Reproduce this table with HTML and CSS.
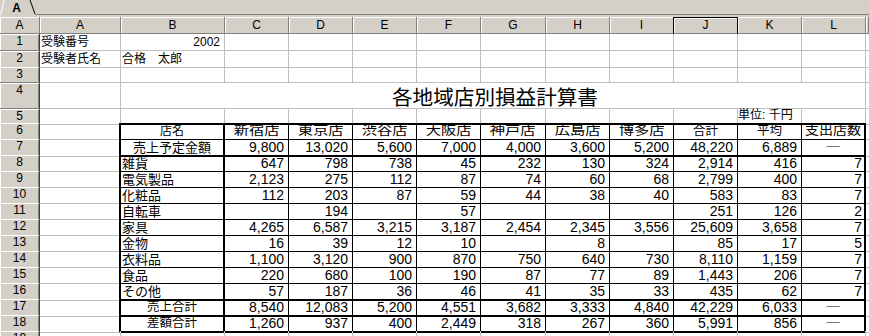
FILE: index.html
```html
<!DOCTYPE html>
<html lang="ja">
<head>
<meta charset="utf-8">
<title>各地域店別損益計算書</title>
<link rel="stylesheet" href="styles.css">
</head>
<body>
<div class="tabs">
  <svg width="869" height="17" viewBox="0 0 869 17">
    <rect width="869" height="17" fill="#d4d0c8"/>
    <line x1="0.5" y1="15" x2="4" y2="0" stroke="#ffffff"/>
    <text x="16.5" y="11.5" font-family="Liberation Sans, sans-serif" font-weight="bold" font-size="12" text-anchor="middle" fill="#000">A</text>
    <line x1="30" y1="0" x2="35" y2="14" stroke="#000000"/>
    <line x1="35" y1="14.5" x2="869" y2="14.5" stroke="#808080"/>
  </svg>
</div>
<div class="sheet">
  <div class="row h17">
    <div class="ch">A</div><div class="ch">A</div><div class="ch">B</div><div class="ch">C</div><div class="ch">D</div><div class="ch">E</div><div class="ch">F</div><div class="ch">G</div><div class="ch">H</div><div class="ch pre">I</div><div class="ch sel">J</div><div class="ch">K</div><div class="ch">L</div><div class="ch end"></div>
  </div>
  <div class="row h17">
    <div class="rh">1</div><div class="c">受験番号</div><div class="c n">2002</div><div class="c"></div><div class="c"></div><div class="c"></div><div class="c"></div><div class="c"></div><div class="c"></div><div class="c"></div><div class="c"></div><div class="c"></div><div class="c"></div><div class="c e"></div>
  </div>
  <div class="row">
    <div class="rh">2</div><div class="c">受験者氏名</div><div class="c">合格　太郎</div><div class="c"></div><div class="c"></div><div class="c"></div><div class="c"></div><div class="c"></div><div class="c"></div><div class="c"></div><div class="c"></div><div class="c"></div><div class="c"></div><div class="c e"></div>
  </div>
  <div class="row">
    <div class="rh">3</div><div class="c"></div><div class="c"></div><div class="c"></div><div class="c"></div><div class="c"></div><div class="c"></div><div class="c"></div><div class="c"></div><div class="c"></div><div class="c"></div><div class="c"></div><div class="c"></div><div class="c e"></div>
  </div>
  <div class="row h26">
    <div class="rh">4</div><div class="c"></div><div class="c title">各地域店別損益計算書</div><div class="c e"></div>
  </div>
  <div class="row h14">
    <div class="rh">5</div><div class="c"></div><div class="c top"></div><div class="c top"></div><div class="c top"></div><div class="c top"></div><div class="c top"></div><div class="c top"></div><div class="c top"></div><div class="c top"></div><div class="c top"></div><div class="c top unit">単位: 千円</div><div class="c top"></div><div class="c e"></div>
  </div>
  <div class="row">
    <div class="rh">6</div><div class="c ta"></div><div class="c tb m s12">店名</div><div class="c t m hd"><span class="wide">新宿店</span></div><div class="c t m hd"><span class="wide">東京店</span></div><div class="c t m hd"><span class="wide">渋谷店</span></div><div class="c t m hd"><span class="wide">大阪店</span></div><div class="c t m hd"><span class="wide">神戸店</span></div><div class="c t m hd"><span class="wide">広島店</span></div><div class="c t m hd"><span class="wide">博多店</span></div><div class="c t m s125">合計</div><div class="c t m s125">平均</div><div class="c tl m hd"><span class="wide2">支出店数</span></div><div class="c e"></div>
  </div>
  <div class="row k">
    <div class="rh">7</div><div class="c ta"></div><div class="c tb m">売上予定金額</div><div class="c t n">9,800</div><div class="c t n">13,020</div><div class="c t n">5,600</div><div class="c t n">7,000</div><div class="c t n">4,000</div><div class="c t n">3,600</div><div class="c t n">5,200</div><div class="c t n">48,220</div><div class="c t n">6,889</div><div class="c tl m"><span class="dash">―</span></div><div class="c e"></div>
  </div>
  <div class="row">
    <div class="rh">8</div><div class="c ta"></div><div class="c tb">雑貨</div><div class="c t n">647</div><div class="c t n">798</div><div class="c t n">738</div><div class="c t n">45</div><div class="c t n">232</div><div class="c t n">130</div><div class="c t n">324</div><div class="c t n">2,914</div><div class="c t n">416</div><div class="c tl n2">7</div><div class="c e"></div>
  </div>
  <div class="row">
    <div class="rh">9</div><div class="c ta"></div><div class="c tb">電気製品</div><div class="c t n">2,123</div><div class="c t n">275</div><div class="c t n">112</div><div class="c t n">87</div><div class="c t n">74</div><div class="c t n">60</div><div class="c t n">68</div><div class="c t n">2,799</div><div class="c t n">400</div><div class="c tl n2">7</div><div class="c e"></div>
  </div>
  <div class="row">
    <div class="rh">10</div><div class="c ta"></div><div class="c tb">化粧品</div><div class="c t n">112</div><div class="c t n">203</div><div class="c t n">87</div><div class="c t n">59</div><div class="c t n">44</div><div class="c t n">38</div><div class="c t n">40</div><div class="c t n">583</div><div class="c t n">83</div><div class="c tl n2">7</div><div class="c e"></div>
  </div>
  <div class="row">
    <div class="rh">11</div><div class="c ta"></div><div class="c tb">自転車</div><div class="c t n"></div><div class="c t n">194</div><div class="c t n"></div><div class="c t n">57</div><div class="c t n"></div><div class="c t n"></div><div class="c t n"></div><div class="c t n">251</div><div class="c t n">126</div><div class="c tl n2">2</div><div class="c e"></div>
  </div>
  <div class="row">
    <div class="rh">12</div><div class="c ta"></div><div class="c tb">家具</div><div class="c t n">4,265</div><div class="c t n">6,587</div><div class="c t n">3,215</div><div class="c t n">3,187</div><div class="c t n">2,454</div><div class="c t n">2,345</div><div class="c t n">3,556</div><div class="c t n">25,609</div><div class="c t n">3,658</div><div class="c tl n2">7</div><div class="c e"></div>
  </div>
  <div class="row">
    <div class="rh">13</div><div class="c ta"></div><div class="c tb">金物</div><div class="c t n">16</div><div class="c t n">39</div><div class="c t n">12</div><div class="c t n">10</div><div class="c t n"></div><div class="c t n">8</div><div class="c t n"></div><div class="c t n">85</div><div class="c t n">17</div><div class="c tl n2">5</div><div class="c e"></div>
  </div>
  <div class="row">
    <div class="rh">14</div><div class="c ta"></div><div class="c tb">衣料品</div><div class="c t n">1,100</div><div class="c t n">3,120</div><div class="c t n">900</div><div class="c t n">870</div><div class="c t n">750</div><div class="c t n">640</div><div class="c t n">730</div><div class="c t n">8,110</div><div class="c t n">1,159</div><div class="c tl n2">7</div><div class="c e"></div>
  </div>
  <div class="row">
    <div class="rh">15</div><div class="c ta"></div><div class="c tb">食品</div><div class="c t n">220</div><div class="c t n">680</div><div class="c t n">100</div><div class="c t n">190</div><div class="c t n">87</div><div class="c t n">77</div><div class="c t n">89</div><div class="c t n">1,443</div><div class="c t n">206</div><div class="c tl n2">7</div><div class="c e"></div>
  </div>
  <div class="row k">
    <div class="rh">16</div><div class="c ta"></div><div class="c tb">その他</div><div class="c t n">57</div><div class="c t n">187</div><div class="c t n">36</div><div class="c t n">46</div><div class="c t n">41</div><div class="c t n">35</div><div class="c t n">33</div><div class="c t n">435</div><div class="c t n">62</div><div class="c tl n2">7</div><div class="c e"></div>
  </div>
  <div class="row k">
    <div class="rh">17</div><div class="c ta"></div><div class="c tb m s125">売上合計</div><div class="c t n">8,540</div><div class="c t n">12,083</div><div class="c t n">5,200</div><div class="c t n">4,551</div><div class="c t n">3,682</div><div class="c t n">3,333</div><div class="c t n">4,840</div><div class="c t n">42,229</div><div class="c t n">6,033</div><div class="c tl m"><span class="dash">―</span></div><div class="c e"></div>
  </div>
  <div class="row k">
    <div class="rh">18</div><div class="c ta"></div><div class="c tb m s125">差額合計</div><div class="c t n">1,260</div><div class="c t n">937</div><div class="c t n">400</div><div class="c t n">2,449</div><div class="c t n">318</div><div class="c t n">267</div><div class="c t n">360</div><div class="c t n">5,991</div><div class="c t n">856</div><div class="c tl m"><span class="dash">―</span></div><div class="c e"></div>
  </div>
  <div class="row">
    <div class="rh">19</div><div class="c"></div><div class="c"></div><div class="c"></div><div class="c"></div><div class="c"></div><div class="c"></div><div class="c"></div><div class="c"></div><div class="c"></div><div class="c"></div><div class="c"></div><div class="c"></div><div class="c e"></div>
  </div>
</div>
</body>
</html>
```

FILE: styles.css
```css
* {
  box-sizing: border-box;
  margin: 0;
  padding: 0;
}

html, body {
  width: 869px;
  height: 336px;
  overflow: hidden;
  background: #ffffff;
}

body {
  font-family: "Liberation Sans", "Noto Sans CJK JP", sans-serif;
  font-size: 12px;
  color: #000000;
}

.tabs {
  height: 17px;
  background: #d4d0c8;
}

.tabs svg {
  display: block;
}

.sheet {
  display: flex;
  flex-direction: column;
}

.row {
  display: grid;
  grid-template-columns: 40px 81px 104px 64px 64px 64px 64px 65px 64px 64px 64px 64px 64px 3px;
  height: 16px;
  flex: none;
}

.h17 { height: 17px; }
.h26 { height: 26px; }
.h14 { height: 14px; }

.ch {
  background: #d4d0c8;
  border-right: 1px solid #808080;
  border-bottom: 1px solid #808080;
  box-shadow: inset 1px 1px 0 #ffffff;
  text-align: center;
  line-height: 16px;
}

.ch.pre {
  border-right-color: #000000;
}

.ch.sel {
  border-top: 1px solid #000000;
  border-right-color: #000000;
  line-height: 15px;
}

.rh {
  background: #d4d0c8;
  border-right: 1px solid #404040;
  border-bottom: 1px solid #808080;
  box-shadow: inset 1px 1px 0 #ffffff, inset -1px 0 0 #808080;
  text-align: center;
  line-height: 15px;
}

.c {
  border-right: 1px solid #c0c0c0;
  border-bottom: 1px solid #c0c0c0;
  white-space: nowrap;
  line-height: 15px;
  padding: 1px 0 0 1px;
}

.c.e {
  border-right: none;
}

.n {
  text-align: right;
  padding-right: 4px;
}

.n2 {
  text-align: right;
  padding-right: 2px;
}

.m {
  text-align: center;
  padding-left: 0;
}

.title {
  grid-column: span 11;
  display: flex;
  align-items: flex-end;
  justify-content: center;
  font-size: 20.6px;
  line-height: 21px;
  padding: 0 0 0 4px;
}

.top {
  border-bottom: 2px solid #000000;
}

.unit {
  padding: 0;
  line-height: 13px;
}

.ta {
  border-right: 2px solid #000000;
}

.tb {
  border-right: 2px solid #000000;
  border-bottom: 1px solid #000000;
  font-size: 13px;
}

.t {
  border-right: 1px solid #000000;
  border-bottom: 1px solid #000000;
  font-size: 14px;
}

.tl {
  border-right: 2px solid #000000;
  border-bottom: 1px solid #000000;
  font-size: 14px;
}

.k .t, .k .tb, .k .tl {
  border-bottom-width: 2px;
}

.s12 { font-size: 12px; }
.s125 { font-size: 12.5px; }

.hd {
  font-size: 12.5px;
}

.wide {
  display: inline-block;
  transform: scaleX(1.22);
}

.wide2 {
  display: inline-block;
  font-size: 12px;
  transform: scaleX(1.17);
}

.dash {
  display: inline-block;
  font-family: "Noto Sans CJK JP", sans-serif;
  font-size: 12px;
  line-height: 12px;
  transform: scaleX(1.3);
}
```
